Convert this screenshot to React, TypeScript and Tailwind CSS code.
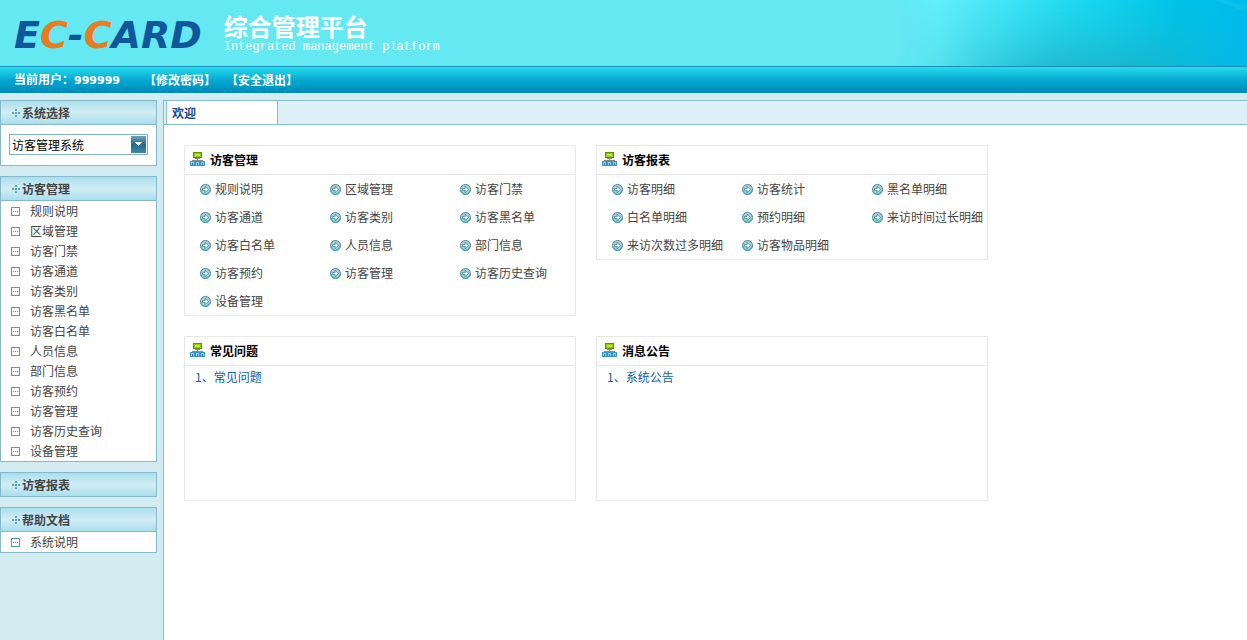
import React, { useState } from 'react';

interface MenuGroup {
  title: string;
  items: string[];
}

const visitorMenu = [
  '规则说明', '区域管理', '访客门禁', '访客通道', '访客类别', '访客黑名单', '访客白名单',
  '人员信息', '部门信息', '访客预约', '访客管理', '访客历史查询', '设备管理',
];

const reportMenu = [
  '访客明细', '访客统计', '黑名单明细', '白名单明细', '预约明细',
  '来访时间过长明细', '来访次数过多明细', '访客物品明细',
];

const menuGroups: MenuGroup[] = [
  { title: '访客管理', items: visitorMenu },
  { title: '访客报表', items: reportMenu },
  { title: '帮助文档', items: ['系统说明'] },
];

const DotsIcon: React.FC = () => (
  <svg className="w-2 h-2 shrink-0" viewBox="0 0 8 8" fill="#5aa5b8" shapeRendering="crispEdges" aria-hidden="true">
    <path d="M3 0h2v2H3zM0 3h2v2H0zM3 3h2v2H3zM6 3h2v2H6zM3 6h2v2H3z" />
  </svg>
);

const NodeIcon: React.FC = () => (
  <svg className="w-[9px] h-[9px] shrink-0" viewBox="0 0 9 9" shapeRendering="crispEdges" aria-hidden="true">
    <rect width="9" height="9" fill="#4f9db4" />
    <rect x="1" y="1" width="7" height="7" fill="#fff" />
    <path d="M2 4h1v1H2zM4 4h1v1H4zM6 4h1v1H6z" fill="#4f93a8" />
  </svg>
);

const SitemapIcon: React.FC = () => (
  <svg className="w-[15px] h-4 shrink-0" viewBox="0 0 15 16" aria-hidden="true">
    <g shapeRendering="crispEdges">
      <rect x="3" y="0" width="9" height="6" fill="#5b9300" />
      <rect x="4" y="1" width="7" height="4" fill="#8fd000" />
      <rect x="5" y="2" width="5" height="2" fill="#b9e650" />
      <path d="M7 6h1v3H7zM5 6h5v1H5zM2 8h11v1H2z" fill="#8a8a8a" />
      <path d="M0 9h5v5H0zM5 9h5v5H5zM10 9h5v5h-5z" fill="#3a94c6" />
      <path d="M1 10h3v3H1zM6 10h3v3H6zM11 10h3v3h-3z" fill="#8ad2f2" />
      <path d="M2 11h1v2H2zM7 11h1v2H7zM12 11h1v2h-1z" fill="#2180b8" />
    </g>
  </svg>
);

const ArrowIcon: React.FC = () => (
  <svg className="w-[11px] h-[11px] shrink-0" viewBox="0 0 11 11" aria-hidden="true">
    <circle cx="5.5" cy="5.5" r="5" fill="#a5d3de" stroke="#557f92" />
    <path d="M1 6.5a4.6 4.6 0 0 0 9 0" fill="none" stroke="#45b4c2" strokeWidth="1.3" />
    <path d="M2.5 4.6h2.6V2.5L8.6 5.5 5.1 8.5V6.4H2.5z" fill="#fff" stroke="#3a8299" strokeWidth="0.8" />
  </svg>
);

const Banner: React.FC = () => (
  <svg className="absolute right-0 top-0 h-full w-[350px]" viewBox="0 0 350 66" preserveAspectRatio="none" aria-hidden="true">
    <defs>
      <linearGradient id="sky" x1="0" y1="0" x2="1" y2="0">
        <stop offset="0" stopColor="#64e8f2" />
        <stop offset="0.12" stopColor="#62eefa" />
        <stop offset="0.35" stopColor="#38e3f5" />
        <stop offset="0.55" stopColor="#18d6ef" />
        <stop offset="0.8" stopColor="#00c3e8" />
        <stop offset="1" stopColor="#00baee" />
      </linearGradient>
      <linearGradient id="shade" x1="0" y1="0" x2="0" y2="1">
        <stop offset="0" stopColor="#1fb0c4" stopOpacity="0" />
        <stop offset="0.4" stopColor="#1fb0c4" stopOpacity="0.25" />
        <stop offset="1" stopColor="#1fa9bf" stopOpacity="0.7" />
      </linearGradient>
      <linearGradient id="fade" x1="0" y1="0" x2="1" y2="0">
        <stop offset="0" stopColor="#000" />
        <stop offset="0.15" stopColor="#555" />
        <stop offset="0.45" stopColor="#eee" />
        <stop offset="0.7" stopColor="#ddd" />
        <stop offset="1" stopColor="#222" />
      </linearGradient>
      <mask id="edge">
        <rect width="350" height="66" fill="url(#fade)" />
      </mask>
    </defs>
    <rect width="350" height="66" fill="url(#sky)" />
    <rect width="350" height="66" fill="url(#shade)" mask="url(#edge)" />
    <path d="M318 0C330 5 340 8 350 12V5C342 4 334 2 328 0z" fill="#2fd2f3" opacity="0.25" />
  </svg>
);

const SidePanel: React.FC<{ title: string; open?: boolean; onToggle?: () => void; children?: React.ReactNode }> = ({
  title, open = true, onToggle, children,
}) => (
  <section className="border border-[#85b8c8] bg-white">
    <button
      type="button"
      onClick={onToggle}
      aria-expanded={open}
      className={`flex w-full items-center gap-0.5 pl-[11px] text-left font-bold text-[#444] bg-linear-to-b from-[#a9dfed] via-[#d2edf4] to-[#a9dfed] ${
        open ? 'h-6 border-b border-[#85b8c8]' : 'h-[23px]'
      }`}
    >
      <DotsIcon />
      <span>{title}</span>
    </button>
    {open && children}
  </section>
);

const Card: React.FC<{ title: string; className?: string; children: React.ReactNode }> = ({ title, className = '', children }) => (
  <section className={`border border-[#e8e8e8] bg-white ${className}`}>
    <h2 className="flex h-[29px] items-center gap-[5px] pl-[5px] border-b border-[#e8e8e8] font-bold text-black">
      <SitemapIcon />
      <span>{title}</span>
    </h2>
    {children}
  </section>
);

const LinkGrid: React.FC<{ items: string[] }> = ({ items }) => (
  <ul className="grid grid-cols-3 pl-[15px] -mr-[15px]">
    {items.map((item) => (
      <li key={item} className="h-7">
        <a href="#" className="flex h-full items-center gap-1 whitespace-nowrap text-[#444] hover:underline">
          <ArrowIcon />
          <span>{item}</span>
        </a>
      </li>
    ))}
  </ul>
);

export default function App() {
  const [system, setSystem] = useState('访客管理系统');
  const [open, setOpen] = useState<Record<string, boolean>>({ 访客管理: true, 帮助文档: true });

  return (
    <div className="flex min-h-screen flex-col overflow-hidden bg-[#d3ecf1] text-xs font-['Noto_Sans_CJK_SC',sans-serif]">
      <header>
        <div className="relative flex h-[66px] items-center bg-[#64e8f2] pl-3.5">
          <Banner />
          <div className="relative flex items-center gap-[22px]">
            <div className="pt-1 font-['DejaVu_Sans',sans-serif] text-[38px] leading-10 font-bold italic text-[#11569b]">
              E<span className="text-[#e87c1e]">C</span>-<span className="text-[#e87c1e]">C</span>ARD
            </div>
            <h1 className="text-white">
              <span className="block text-2xl leading-7 font-bold">综合管理平台</span>
              <span className="block font-['Liberation_Mono',monospace] text-xs leading-[14px]">Integrated management platform</span>
            </h1>
          </div>
        </div>
        <nav className="flex h-[27px] items-center border-t border-[#1b8fb8] bg-linear-to-b from-[#25dcf0] via-[#06a9d0] to-[#008abb] pl-3.5 font-bold text-white">
          <span>
            当前用户：<span className="font-['DejaVu_Sans',sans-serif] text-[11px]">999999</span>
          </span>
          <a href="#" className="ml-6 hover:underline">【修改密码】</a>
          <a href="#" className="ml-2.5 hover:underline">【安全退出】</a>
        </nav>
      </header>

      <div className="flex flex-1 gap-1.5 pt-[7px]">
        <aside className="flex w-[157px] shrink-0 flex-col gap-2.5">
          <SidePanel title="系统选择">
            <div className="relative px-2 pt-[9px] pb-2.5">
              <select
                aria-label="系统选择"
                value={system}
                onChange={(e) => setSystem(e.target.value)}
                className="block h-[21px] w-full appearance-none border border-[#7fb1bb] bg-white pl-0.5 text-black"
              >
                <option>访客管理系统</option>
              </select>
              <svg className="pointer-events-none absolute right-2.5 top-[11px] w-[15px] h-[17px]" viewBox="0 0 15 17" aria-hidden="true">
                <defs>
                  <linearGradient id="drop" x1="0" y1="0" x2="0" y2="1">
                    <stop offset="0" stopColor="#6da0b8" />
                    <stop offset="0.5" stopColor="#226a90" />
                    <stop offset="1" stopColor="#4385a3" />
                  </linearGradient>
                </defs>
                <rect width="15" height="17" fill="url(#drop)" />
                <path d="M4 6h7v1h-1v1H9v1H8v1H7V9H6V8H5V7H4z" fill="#fff" shapeRendering="crispEdges" />
              </svg>
            </div>
          </SidePanel>

          {menuGroups.map((group) => (
            <SidePanel
              key={group.title}
              title={group.title}
              open={!!open[group.title]}
              onToggle={() => setOpen({ ...open, [group.title]: !open[group.title] })}
            >
              <ul>
                {group.items.map((item) => (
                  <li key={item}>
                    <a href="#" className="flex h-5 items-center gap-2.5 pl-2.5 text-[#444] hover:underline">
                      <NodeIcon />
                      <span>{item}</span>
                    </a>
                  </li>
                ))}
              </ul>
            </SidePanel>
          ))}
        </aside>

        <main className="min-w-0 flex-1 border-l border-[#85b8c8] bg-white">
          <div role="tablist" className="flex h-[25px] border-y border-[#85bfcb] bg-[#ddf0f7] pl-0.5">
            <button
              type="button"
              role="tab"
              aria-selected="true"
              className="w-28 border-x border-[#85bfcb] bg-white pl-[5px] text-left font-bold text-[#15498b]"
            >
              欢迎
            </button>
          </div>

          <div className="grid grid-cols-[repeat(auto-fill,392px)] items-start gap-5 p-5">
            <Card title="访客管理">
              <LinkGrid items={visitorMenu} />
            </Card>
            <Card title="访客报表">
              <LinkGrid items={reportMenu} />
            </Card>
            <Card title="常见问题" className="min-h-[165px]">
              <a href="#" className="block pl-2.5 leading-[22px] text-[#0b5fb0] hover:underline">1、常见问题</a>
            </Card>
            <Card title="消息公告" className="min-h-[165px]">
              <a href="#" className="block pl-2.5 leading-[22px] text-[#0b5fb0] hover:underline">1、系统公告</a>
            </Card>
          </div>
        </main>
      </div>
    </div>
  );
}
